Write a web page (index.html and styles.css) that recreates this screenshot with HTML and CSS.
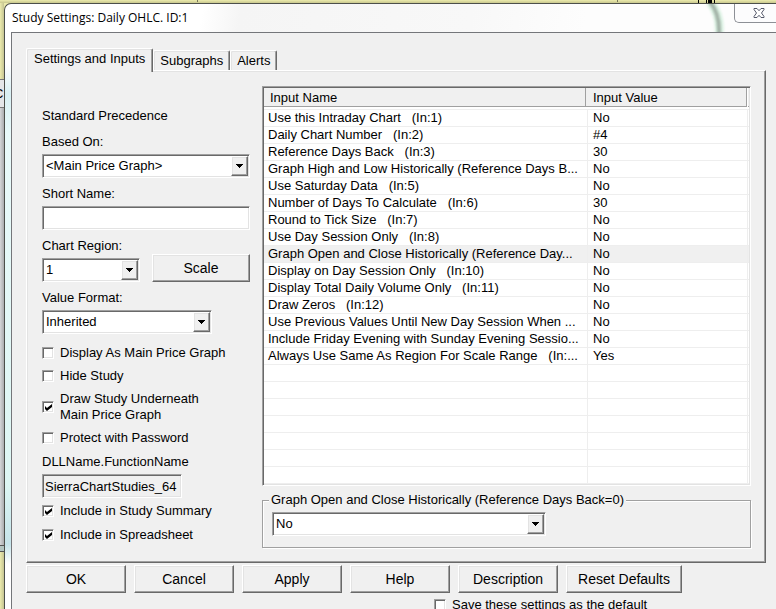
FILE: index.html
```html
<!DOCTYPE html>
<html lang="en">
<head>
<meta charset="utf-8">
<title>Study Settings: Daily OHLC. ID:1</title>
<link rel="stylesheet" href="styles.css">
</head>
<body>
<svg class="symbols" aria-hidden="true">
  <symbol id="arrow" viewBox="0 0 7 4"><path d="M0 0h7v1h-1v1h-1v1h-1v1h-1v-1h-1v-1h-1v-1h-1z"/></symbol>
</svg>
<div class="desktop">
  <div class="backdrop-top" aria-hidden="true">
    <svg class="bars" viewBox="0 0 18 3" width="18" height="3"><path d="M1 0h1v3h-1zM9 0h1v3h-1zM11 0h4v3h-4zM17 0h1v3h-1z"/></svg>
    <i class="tick tick-a"></i><i class="tick tick-b"></i>
  </div>
  <div class="backdrop-row">
    <div class="peek" aria-hidden="true">
      <div class="peek-tab"><span>C</span></div>
      <div class="peek-body"></div>
      <div class="peek-edge"></div>
    </div>
    <div class="window">
      <header class="titlebar">
        <h1>Study Settings: Daily OHLC. ID:1</h1>
        <svg class="smear" viewBox="0 0 30 28" width="30" height="28" aria-hidden="true"><path class="halo" d="M8-2Q19 11 17 30"/><path class="core" d="M8-2Q18 10 17 30"/></svg>
        <button class="close" type="button" aria-label="Close">
          <svg viewBox="0 0 12 10" width="12" height="10"><path d="M1 .5h3l2 2.200 2-2.200h3v1L8.500 5 11 8.500v1H8L6 7.300 4 9.500H1v-1L3.500 5 1 1.500z"/></svg>
        </button>
      </header>
      <main class="client">
        <div class="tabs" role="tablist">
          <button class="tab active" type="button" role="tab" aria-selected="true">Settings and Inputs</button>
          <button class="tab" type="button" role="tab" aria-selected="false">Subgraphs</button>
          <button class="tab" type="button" role="tab" aria-selected="false">Alerts</button>
        </div>
        <section class="panel">
          <div class="options">
            <p class="note">Standard Precedence</p>
            <div class="field">
              <label for="based">Based On:</label>
              <div class="combo"><select id="based"><option>&lt;Main Price Graph&gt;</option></select><span class="drop"><svg width="7" height="4"><use href="#arrow"/></svg></span></div>
            </div>
            <div class="field">
              <label for="short">Short Name:</label>
              <input class="box" id="short" type="text">
            </div>
            <div class="region-row">
              <div class="field">
                <label for="region">Chart Region:</label>
                <div class="combo region"><select id="region"><option>1</option></select><span class="drop"><svg width="7" height="4"><use href="#arrow"/></svg></span></div>
              </div>
              <button class="push scale" type="button">Scale</button>
            </div>
            <div class="field">
              <label for="format">Value Format:</label>
              <div class="combo format"><select id="format"><option>Inherited</option></select><span class="drop"><svg width="7" height="4"><use href="#arrow"/></svg></span></div>
            </div>
            <div class="checks">
              <label class="check"><input type="checkbox">Display As Main Price Graph</label>
              <label class="check"><input type="checkbox">Hide Study</label>
              <label class="check"><input type="checkbox" checked><span>Draw Study Underneath<br>Main Price Graph</span></label>
              <label class="check"><input type="checkbox">Protect with Password</label>
            </div>
            <div class="library">
              <div class="field">
                <label for="dll">DLLName.FunctionName</label>
                <input class="box dll" id="dll" type="text" readonly value="SierraChartStudies_64">
              </div>
              <div class="includes">
                <label class="check"><input type="checkbox" checked>Include in Study Summary</label>
                <label class="check"><input type="checkbox" checked>Include in Spreadsheet</label>
              </div>
            </div>
          </div>
          <div class="inputs">
            <div class="list">
              <table>
                <colgroup><col class="name-col"><col><col class="end-col"></colgroup>
                <thead><tr><th><span>Input Name</span></th><th><span>Input Value</span></th><th><span></span></th></tr></thead>
                <tbody>
                  <tr><td>Use this Intraday Chart   (In:1)</td><td>No</td><td></td></tr>
                  <tr><td>Daily Chart Number   (In:2)</td><td>#4</td><td></td></tr>
                  <tr><td>Reference Days Back   (In:3)</td><td>30</td><td></td></tr>
                  <tr><td>Graph High and Low Historically (Reference Days B...</td><td>No</td><td></td></tr>
                  <tr><td>Use Saturday Data   (In:5)</td><td>No</td><td></td></tr>
                  <tr><td>Number of Days To Calculate   (In:6)</td><td>30</td><td></td></tr>
                  <tr><td>Round to Tick Size   (In:7)</td><td>No</td><td></td></tr>
                  <tr><td>Use Day Session Only   (In:8)</td><td>No</td><td></td></tr>
                  <tr class="selected"><td>Graph Open and Close Historically (Reference Day...</td><td>No</td><td></td></tr>
                  <tr><td>Display on Day Session Only   (In:10)</td><td>No</td><td></td></tr>
                  <tr><td>Display Total Daily Volume Only   (In:11)</td><td>No</td><td></td></tr>
                  <tr><td>Draw Zeros   (In:12)</td><td>No</td><td></td></tr>
                  <tr><td>Use Previous Values Until New Day Session When ...</td><td>No</td><td></td></tr>
                  <tr><td>Include Friday Evening with Sunday Evening Sessio...</td><td>No</td><td></td></tr>
                  <tr><td>Always Use Same As Region For Scale Range   (In:...</td><td>Yes</td><td></td></tr>
                  <tr><td></td><td></td><td></td></tr>
                  <tr><td></td><td></td><td></td></tr>
                  <tr><td></td><td></td><td></td></tr>
                  <tr><td></td><td></td><td></td></tr>
                  <tr><td></td><td></td><td></td></tr>
                  <tr><td></td><td></td><td></td></tr>
                  <tr><td></td><td></td><td></td></tr>
                </tbody>
              </table>
            </div>
            <fieldset>
              <legend><label for="value">Graph Open and Close Historically (Reference Days Back=0)</label></legend>
              <div class="combo value"><select id="value"><option>No</option><option>Yes</option></select><span class="drop"><svg width="7" height="4"><use href="#arrow"/></svg></span></div>
            </fieldset>
          </div>
        </section>
        <div class="actions">
          <button class="push" type="button">OK</button>
          <button class="push" type="button">Cancel</button>
          <button class="push" type="button">Apply</button>
          <button class="push" type="button">Help</button>
          <button class="push" type="button">Description</button>
          <button class="push wide" type="button">Reset Defaults</button>
        </div>
        <label class="check save"><input type="checkbox">Save these settings as the default</label>
      </main>
    </div>
  </div>
</div>
</body>
</html>
```
FILE: styles.css
```css
:root {
  --face: #f0f0f0;
  --light: #e3e3e3;
  --mid: #a0a0a0;
  --dark: #696969;
  --sand: #ecebad;
}

* { box-sizing: border-box; }

body {
  margin: 0;
  height: 100vh;
  overflow: hidden;
  color: #000;
  font: 13px/16px "Liberation Sans", Arial, sans-serif;
}

button, input, select { font: inherit; color: inherit; margin: 0; border-radius: 0; }
.symbols { position: absolute; width: 0; height: 0; }

/* Backdrop behind the dialog */
.desktop { display: flex; flex-direction: column; min-height: 100vh; background: var(--sand); }
.backdrop-top { position: relative; height: 3px; background: linear-gradient(#ecebad, #c9c88f); }
.bars { position: absolute; top: 0; right: 61px; }
.tick { position: absolute; top: 0; width: 1px; height: 2px; background: #77775a; }
.tick-a { left: 197px; }
.tick-b { left: 617px; }
.backdrop-row { flex: 1; display: flex; }
.peek { width: 4px; flex: none; padding-top: 76px; overflow: hidden; background: linear-gradient(90deg, #ecebad, #c5c492); }
.peek-tab { height: 29px; padding-top: 6px; border: solid #777; border-width: 1px 0; background: #e4e6e8; }
.peek-tab span { display: block; margin-left: -6px; }
.peek-body { height: 437px; background: linear-gradient(90deg, #d5d7d9, #aaacae); }
.peek-edge { height: 7px; border: solid #555; border-width: 1px 0; background: #b4c6c2; }

/* Window frame */
.window {
  flex: 1;
  min-width: 0;
  display: flex;
  flex-direction: column;
  padding-left: 6px;
  border: solid #4c4f4a;
  border-width: 1px 0 0 1px;
  border-radius: 7px 0 0 0;
  background: linear-gradient(#fff 0, #fff 60px, #d9f0f3 90px, #e9fafa 130px, #ddf6f3 480px, #c6e4ea 540px, #fff 560px);
}
.titlebar {
  position: relative;
  display: flex;
  justify-content: space-between;
  align-items: flex-start;
  height: 28px;
  background: linear-gradient(100deg, #fff 25%, #f5f5f5 30%, #f8f8f8 60%, #fdfdfd 75%);
}
h1 { margin: 6px 0 0 1px; font: 12px/16px "Open Sans", "Noto Sans", sans-serif; }
.smear { position: absolute; top: 0; right: 44px; fill: none; }
.smear path { filter: blur(1px); }
.halo { stroke: #dcf2e4; stroke-width: 9; }
.core { stroke: #a3b3a8; stroke-width: 4; }
.close {
  display: flex;
  width: 42px;
  height: 19px;
  padding: 4px 0 0 18px;
  border: solid #8d9096;
  border-width: 0 0 1px 1px;
  border-radius: 0 0 0 5px;
  background: #fcfcfd;
}
.close path { fill: #fff; stroke: #54586a; }

.client {
  flex: 1;
  padding: 15px 10px 0 14px;
  border: solid #74767a;
  border-width: 1px 0 0 1px;
  background: var(--face);
}

/* Tabs */
.tabs { display: flex; align-items: flex-end; }
.tab {
  height: 20px;
  padding: 0 6px;
  border: solid;
  border-width: 1px;
  border-color: #fff var(--dark) transparent #fff;
  border-bottom: 0;
  border-radius: 2px 2px 0 0;
  box-shadow: inset -1px 0 var(--mid), inset 1px 1px var(--light);
  background: var(--face);
}
.tab.active { position: relative; height: 24px; margin-bottom: -2px; padding: 0 7px 3px; }

/* Bevels */
.panel, .push, .drop {
  border: 1px solid;
  border-color: #fff var(--dark) var(--dark) #fff;
  box-shadow: inset -1px -1px var(--mid), inset 1px 1px var(--light);
  background: var(--face);
}
.list, .combo, .box {
  border: 1px solid;
  border-color: var(--mid) #fff #fff var(--mid);
  background: #fff;
}
.combo, .box { box-shadow: inset 1px 1px var(--dark), inset -1px -1px var(--light); }

.panel { display: flex; gap: 12px; padding: 15px 14px 14px 15px; }

/* Left column */
.options { flex: none; width: 208px; padding-top: 22px; display: flex; flex-direction: column; gap: 8px; }
.note { margin: 0 0 2px; }
.field { display: flex; flex-direction: column; gap: 4px; }
.box { width: 100%; height: 24px; padding: 2px; outline: 0; }
.dll { width: 140px; background: var(--face); }
.combo { position: relative; height: 24px; padding: 2px; }
.combo select {
  display: block;
  width: 100%;
  height: 18px;
  padding: 0 18px 0 1px;
  border: 0;
  outline: 0;
  background: transparent;
  appearance: none;
}
.drop {
  position: absolute;
  top: 1px;
  right: 1px;
  bottom: 1px;
  width: 17px;
  display: grid;
  place-items: center;
  pointer-events: none;
}
.region { width: 98px; }
.format { width: 170px; }
.region-row { display: flex; justify-content: space-between; align-items: flex-end; }
.push { flex: none; width: 100px; height: 28px; padding: 0; font-size: 14px; }
.region-row .push { width: 98px; }

.checks { display: flex; flex-direction: column; gap: 7px; padding-top: 3px; }
.library { display: flex; flex-direction: column; gap: 5px; }
.includes { display: flex; flex-direction: column; gap: 8px; }
.check { display: flex; align-items: center; gap: 6px; }
.check input {
  appearance: none;
  flex: none;
  width: 12px;
  height: 12px;
  border: 1px solid;
  border-color: var(--mid) #fff #fff var(--mid);
  box-shadow: inset 1px 1px var(--dark), inset -1px -1px var(--light);
  background: #fff;
}
.check input:checked::before {
  content: "";
  display: block;
  width: 7px;
  height: 7px;
  margin: 2px;
  background: #000;
  clip-path: polygon(0 28%, 28% 57%, 100% 0, 100% 43%, 28% 100%, 0 72%);
}

/* Right column */
.inputs { flex: 1; min-width: 0; display: flex; flex-direction: column; gap: 6px; }
.list { padding: 1px; box-shadow: inset 1px 1px var(--dark), inset -1px -1px var(--light); }
table { width: 100%; table-layout: fixed; border-collapse: separate; border-spacing: 0; }
.name-col { width: 324px; }
.end-col { width: 1px; }
th { height: 22px; padding: 0 0 2px; border-bottom: 1px solid #eee; font-weight: normal; text-align: left; }
th span {
  display: block;
  height: 19px;
  padding: 2px 0 0 6px;
  margin-right: 2px;
  border: solid var(--mid);
  border-width: 0 1px 1px 0;
  background: var(--face);
}
th:nth-child(2) span { margin: 0 1px 0 -2px; padding-left: 7px; }
th:last-child span { margin: 0; padding: 0; border-right: 0; }
td {
  height: 17px;
  padding: 0 0 0 4px;
  border: solid #eee;
  border-width: 0 1px 1px 0;
  overflow: hidden;
  white-space: pre;
}
td:nth-child(2) { padding-left: 5px; }
td:last-child { padding: 0; border-right: 0; }
.selected td { background: var(--face); }

fieldset {
  min-width: 0;
  margin: 0;
  padding: 4px 9px 11px;
  border: 1px solid var(--mid);
  box-shadow: 1px 1px #fff, inset 1px 1px #fff;
}
legend { margin-left: -3px; padding: 0 2px; background: var(--face); }
.value { width: 274px; max-width: 100%; }

/* Bottom row */
.actions { display: flex; gap: 8px; margin-top: 2px; }
.actions .wide { width: 116px; }
.save { margin: 4px 0 0 408px; }
```
